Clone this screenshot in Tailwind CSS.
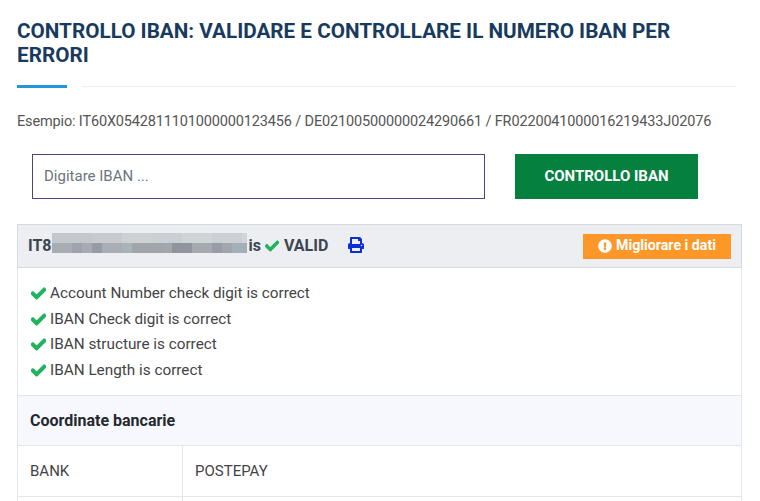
<!doctype html>
<html><head><meta charset="utf-8"><script src="https://cdn.jsdelivr.net/npm/@tailwindcss/browser@4"></script></head>
<body class="bg-white overflow-hidden font-['Roboto',sans-serif] text-[15px] text-[#444]">
<div class="h-[501px] overflow-hidden pl-[17px] w-[760px]">
  <div class="w-[719px] pt-[19px]">
    <h1 class="text-[20.7px] leading-[24px] font-bold text-[#183a5e] w-[680px]">CONTROLLO IBAN: VALIDARE E CONTROLLARE IL NUMERO IBAN PER ERRORI</h1>
    <div class="flex items-center gap-[15px] mt-[18px] h-[3px]">
      <div class="w-[50px] h-[3px] bg-[#2196d8]"></div>
      <div class="flex-1 h-px bg-[#eeeeee]"></div>
    </div>
  </div>
  <p class="mt-[23px] leading-[22px] text-[14.5px] tracking-[-0.15px] text-[#555] whitespace-nowrap">Esempio: IT60X0542811101000000123456 / DE02100500000024290661 / FR0220041000016219433J02076</p>
  <div class="flex mt-[21px] ml-[15px] h-[45px]">
    <div class="w-[453px] h-[45px] border border-[#54427a] flex items-center pl-[11px] text-[#6c757d]">Digitare IBAN ...</div>
    <button class="ml-[30px] w-[183px] h-[45px] bg-[#05803f] text-white font-bold text-[15px]">CONTROLLO IBAN</button>
  </div>
  <div class="mt-[25px] w-[725px] border-x border-[#e3e6ea]">
    <div class="h-[44px] -mx-px bg-[#eceef2] border border-[#d6d9dd] flex items-center pl-[10px] pr-[10px] font-bold text-[16px] text-[#3d4650]">
      <span>IT8</span>
      <div class="ml-0 mb-[6px] w-[195px] h-[20px] flex flex-col">
        <div class="flex h-[10px]">
          <div class="w-[40px] bg-[#c4c8cc]"></div><div class="w-[30px] bg-[#c7cace]"></div><div class="w-[30px] bg-[#cdd1d4]"></div><div class="w-[30px] bg-[#cbcfd3]"></div><div class="w-[30px] bg-[#d0d4d7]"></div><div class="w-[30px] bg-[#cccfd3]"></div><div class="w-[5px] bg-[#d0d5d9]"></div>
        </div>
        <div class="flex h-[10px]">
          <div class="w-[20px] bg-[#a8adb3]"></div><div class="w-[10px] bg-[#9fa4ac]"></div><div class="w-[10px] bg-[#a8acb2]"></div><div class="w-[10px] bg-[#969ca6]"></div><div class="w-[20px] bg-[#a8aeb4]"></div><div class="w-[10px] bg-[#a8b4ba]"></div><div class="w-[30px] bg-[#a0a5ab]"></div><div class="w-[10px] bg-[#a2a7ad]"></div><div class="w-[20px] bg-[#8f949d]"></div><div class="w-[20px] bg-[#a5aab0]"></div><div class="w-[10px] bg-[#989da5]"></div><div class="w-[10px] bg-[#a0a6ac]"></div><div class="w-[15px] bg-[#a4b0b8]"></div>
        </div>
      </div>
      <span class="ml-[2px]">is</span>
      <svg class="ml-[4px] w-[14px] h-[14px]" viewBox="0 0 512 512"><path fill="#1fb25f" stroke="#1fb25f" stroke-width="36" d="M173.898 439.404l-166.4-166.4c-9.997-9.997-9.997-26.206 0-36.204l36.203-36.204c9.997-9.998 26.207-9.998 36.204 0L192 312.69 432.095 72.596c9.997-9.997 26.207-9.997 36.204 0l36.203 36.204c9.997 9.997 9.997 26.206 0 36.204l-294.4 294.401c-9.998 9.997-26.207 9.997-36.204-.001z"/></svg>
      <span class="ml-[5px]">VALID</span>
      <svg class="ml-[20px] w-[16px] h-[16px] mb-[2px]" viewBox="0 0 512 512"><path fill="#0c2fd3" d="M448 192V77.25c0-8.49-3.37-16.62-9.37-22.63L393.37 9.37c-6-6-14.14-9.37-22.63-9.37H96C78.33 0 64 14.33 64 32v160c-35.35 0-64 28.65-64 64v112c0 8.84 7.16 16 16 16h48v96c0 17.67 14.33 32 32 32h320c17.67 0 32-14.33 32-32v-96h48c8.84 0 16-7.16 16-16V256c0-35.35-28.65-64-64-64zm-64 256H128v-96h256v96zm0-224H128V64h192v48c0 8.84 7.16 16 16 16h48v96zm48 72c-13.25 0-24-10.75-24-24 0-13.26 10.75-24 24-24s24 10.74 24 24c0 13.25-10.75 24-24 24z"/></svg>
      <div class="ml-auto w-[148px] h-[25px] bg-[#fd9727] text-white text-[14.2px] flex items-center justify-center gap-[4px]">
        <svg class="w-[14px] h-[14px]" viewBox="0 0 512 512"><path fill="#fff" d="M504 256c0 136.997-111.043 248-248 248S8 392.997 8 256C8 119.083 119.043 8 256 8s248 111.083 248 248zm-248 50c-25.405 0-46 20.595-46 46s20.595 46 46 46 46-20.595 46-46-20.595-46-46-46zm-43.673-165.346l7.418 136c.347 6.364 5.609 11.346 11.982 11.346h48.546c6.373 0 11.635-4.982 11.982-11.346l7.418-136c.375-6.874-5.098-12.654-11.982-12.654h-63.383c-6.884 0-12.356 5.78-11.981 12.654z"/></svg>
        <span>Migliorare i dati</span>
      </div>
    </div>
    <ul class="pt-[13px] pb-[12px] pl-[13px] leading-[25.5px] text-[15.3px] text-[#444]">
      <li class="flex items-center gap-[4px]"><svg class="w-[15px] h-[15px]" viewBox="0 0 512 512"><path fill="#1fb25f" stroke="#1fb25f" stroke-width="36" d="M173.898 439.404l-166.4-166.4c-9.997-9.997-9.997-26.206 0-36.204l36.203-36.204c9.997-9.998 26.207-9.998 36.204 0L192 312.69 432.095 72.596c9.997-9.997 26.207-9.997 36.204 0l36.203 36.204c9.997 9.997 9.997 26.206 0 36.204l-294.4 294.401c-9.998 9.997-26.207 9.997-36.204-.001z"/></svg>Account Number check digit is correct</li>
      <li class="flex items-center gap-[4px]"><svg class="w-[15px] h-[15px]" viewBox="0 0 512 512"><path fill="#1fb25f" stroke="#1fb25f" stroke-width="36" d="M173.898 439.404l-166.4-166.4c-9.997-9.997-9.997-26.206 0-36.204l36.203-36.204c9.997-9.998 26.207-9.998 36.204 0L192 312.69 432.095 72.596c9.997-9.997 26.207-9.997 36.204 0l36.203 36.204c9.997 9.997 9.997 26.206 0 36.204l-294.4 294.401c-9.998 9.997-26.207 9.997-36.204-.001z"/></svg>IBAN Check digit is correct</li>
      <li class="flex items-center gap-[4px]"><svg class="w-[15px] h-[15px]" viewBox="0 0 512 512"><path fill="#1fb25f" stroke="#1fb25f" stroke-width="36" d="M173.898 439.404l-166.4-166.4c-9.997-9.997-9.997-26.206 0-36.204l36.203-36.204c9.997-9.998 26.207-9.998 36.204 0L192 312.69 432.095 72.596c9.997-9.997 26.207-9.997 36.204 0l36.203 36.204c9.997 9.997 9.997 26.206 0 36.204l-294.4 294.401c-9.998 9.997-26.207 9.997-36.204-.001z"/></svg>IBAN structure is correct</li>
      <li class="flex items-center gap-[4px]"><svg class="w-[15px] h-[15px]" viewBox="0 0 512 512"><path fill="#1fb25f" stroke="#1fb25f" stroke-width="36" d="M173.898 439.404l-166.4-166.4c-9.997-9.997-9.997-26.206 0-36.204l36.203-36.204c9.997-9.998 26.207-9.998 36.204 0L192 312.69 432.095 72.596c9.997-9.997 26.207-9.997 36.204 0l36.203 36.204c9.997 9.997 9.997 26.206 0 36.204l-294.4 294.401c-9.998 9.997-26.207 9.997-36.204-.001z"/></svg>IBAN Length is correct</li>
    </ul>
    <div class="h-[51px] bg-[#f7f8fd] border-y border-[#e3e6ea] flex items-center pl-[12px] font-bold text-[16px] text-[#24292e]">Coordinate bancarie</div>
    <div class="flex h-[51px] border-b border-[#e3e6ea]">
      <div class="w-[165px] border-r border-[#e3e6ea] flex items-center pl-[12px]">BANK</div>
      <div class="flex items-center pl-[12px]">POSTEPAY</div>
    </div>
    <div class="flex h-[30px]"><div class="w-[165px] border-r border-[#e3e6ea]"></div></div>
  </div>
</div>
</body></html>
